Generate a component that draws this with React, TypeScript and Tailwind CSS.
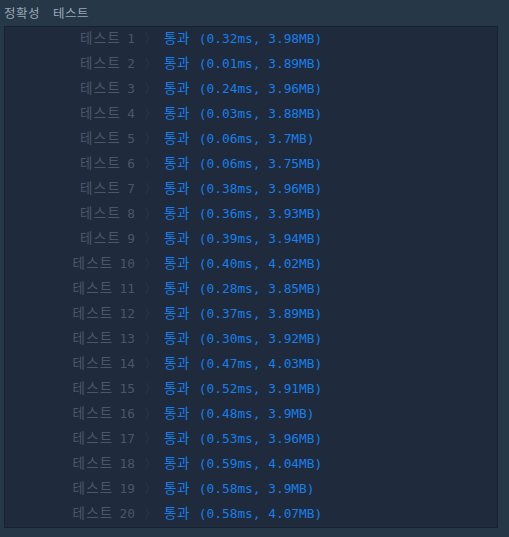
const RESULTS: [string, string][] = [
  ["0.32ms", "3.98MB"],
  ["0.01ms", "3.89MB"],
  ["0.24ms", "3.96MB"],
  ["0.03ms", "3.88MB"],
  ["0.06ms", "3.7MB"],
  ["0.06ms", "3.75MB"],
  ["0.38ms", "3.96MB"],
  ["0.36ms", "3.93MB"],
  ["0.39ms", "3.94MB"],
  ["0.40ms", "4.02MB"],
  ["0.28ms", "3.85MB"],
  ["0.37ms", "3.89MB"],
  ["0.30ms", "3.92MB"],
  ["0.47ms", "4.03MB"],
  ["0.52ms", "3.91MB"],
  ["0.48ms", "3.9MB"],
  ["0.53ms", "3.96MB"],
  ["0.59ms", "4.04MB"],
  ["0.58ms", "3.9MB"],
  ["0.58ms", "4.07MB"],
];

export default function App() {
  return (
    <div className="h-[537px] w-[509px] overflow-hidden bg-[#263747]">
      <div className="flex h-[26px] items-center gap-[13px] pl-[4px] text-[12.5px] tracking-[0.5px] text-[#98a8b9] [font-family:'Noto_Sans_CJK_KR',sans-serif]">
        <span>정확성</span>
        <span>테스트</span>
      </div>
      <div className="ml-[4px] w-[494px] border border-[#172231] bg-[#1f2a3c]">
        {RESULTS.map(([time, mem], i) => (
          <div
            key={i}
            className="flex h-[25px] items-baseline pt-[3px] text-[12.8px] leading-[15px] [font-family:'DejaVu_Sans_Mono',monospace]"
          >
            <span className="w-[130px] whitespace-pre text-right text-[#4b5768]">
              <span className="text-[13.5px] tracking-[1.3px] [font-family:'Noto_Sans_CJK_KR',sans-serif]">
                테스트
              </span>
              <span className="ml-[6px]">{i + 1}</span>
            </span>
            <span className="ml-[9px] w-[20px] text-[#354254]">〉</span>
            <span className="whitespace-pre text-[#1a7fe8]">
              <span className="text-[13.5px] tracking-[0.5px] [font-family:'Noto_Sans_CJK_KR',sans-serif]">
                통과
              </span>
              <span className="ml-[9px]">
                ({time}, {mem})
              </span>
            </span>
          </div>
        ))}
      </div>
    </div>
  );
}
